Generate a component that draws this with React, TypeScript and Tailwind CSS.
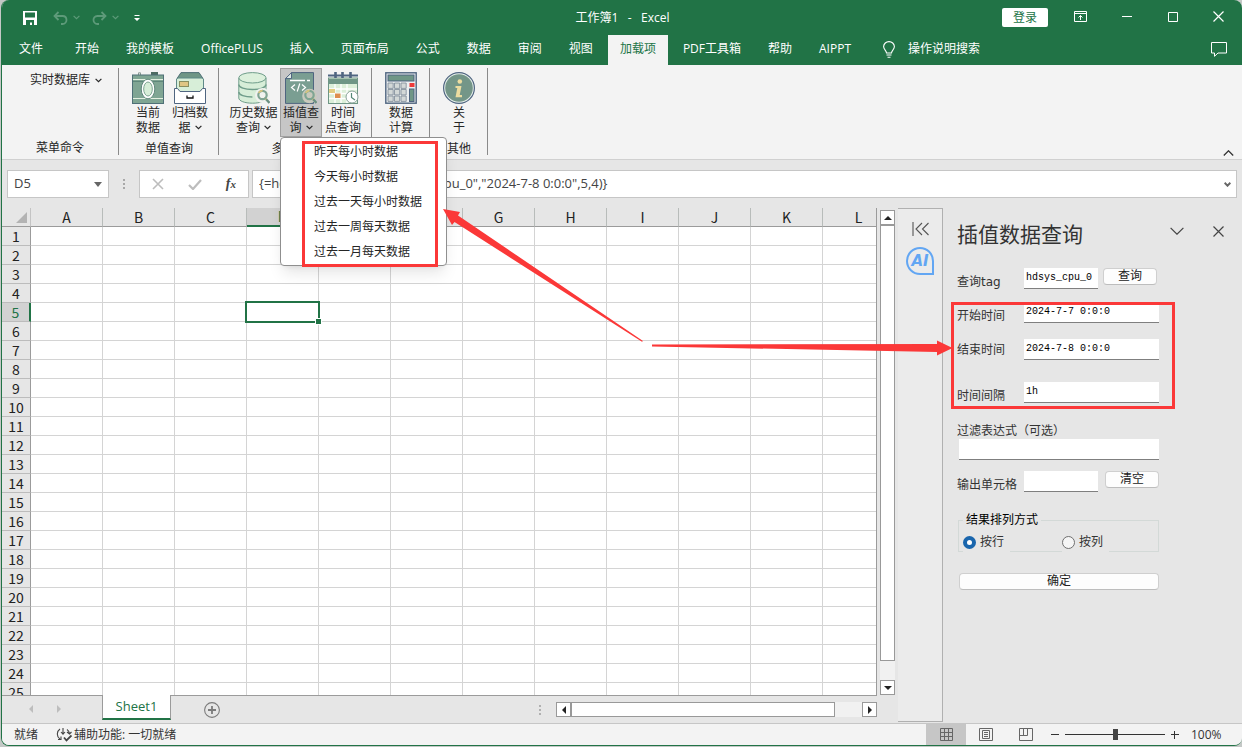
import type { ReactNode } from 'react';

const TABS = ['文件', '开始', '我的模板', 'OfficePLUS', '插入', '页面布局', '公式', '数据', '审阅', '视图', '加载项', 'PDF工具箱', '帮助', 'AIPPT'];
const COLUMNS = ['A', 'B', 'C', 'D', 'E', 'F', 'G', 'H', 'I', 'J', 'K', 'L'];
const ROWS = Array.from({ length: 25 }, (_, i) => i + 1);
const MENU_ITEMS = ['昨天每小时数据', '今天每小时数据', '过去一天每小时数据', '过去一周每天数据', '过去一月每天数据'];
const ACTIVE_COLUMN = 'D';
const ACTIVE_ROW = 5;

function Chevron({ className = '' }: { className?: string }) {
  return (
    <svg viewBox="0 0 7 5" className={`h-[5px] w-[7px] ${className}`} fill="none" stroke="currentColor" strokeWidth="1.2">
      <path d="M.6.8 3.5 3.7 6.4.8" />
    </svg>
  );
}

function Magnifier() {
  return (
    <g>
      <path d="m27.5 26.5 4 4.5" stroke="#6b9080" strokeWidth="2.4" />
      <path d="m26.5 25.5 1.6 1.8" stroke="#dcc67c" strokeWidth="2.6" />
      <circle cx="24.5" cy="23" r="4.2" fill="none" stroke="#7fa593" strokeWidth="2.2" />
      <path d="M20.6 21a4.4 4.4 0 0 1 4-2.4" fill="none" stroke="#dcc67c" strokeWidth="1.6" />
    </g>
  );
}

function CameraIcon() {
  return (
    <svg viewBox="0 0 32 32" className="h-8 w-8">
      <path d="M6.500 3V.8h2V3" fill="#eee" stroke="#8a9a94" />
      <rect x="19" y="0" width="7" height="3" fill="#4d6b62" />
      <rect x=".5" y="3" width="31" height="28.500" fill="#7fa593" stroke="#4f7077" />
      <path d="M1 7.500h30M1 26.500h30" stroke="#e3efe0" />
      <path d="M1 9.500h30" stroke="#5f877a" />
      <ellipse cx="16" cy="17" rx="6.800" ry="9.800" fill="#fff" stroke="#5f877a" />
      <ellipse cx="16" cy="17" rx="4.300" ry="7" fill="#d7eed8" stroke="#7fa593" />
    </svg>
  );
}

function ArchiveIcon() {
  return (
    <svg viewBox="0 0 32 32" className="h-8 w-8">
      <path d="M7 .6h18l4 5.900H3Z" fill="#6f9686" stroke="#4f7077" />
      <path d="M2.500 7 4 6h24l1.500 1v9l-3.500 3.500H6L2.500 16Z" fill="#d7eed8" stroke="#5f8a88" />
      <rect x="5.500" y="9.500" width="9" height="5" fill="#e0c584" stroke="#8a8f60" />
      <path d="M.5 16.500h3l2.500 3h20l2.500-3h3v15H.5Z" fill="#fff" stroke="#4f6580" />
      <path d="M13 23.500v2.500h6v-2.500" fill="none" stroke="#111" strokeWidth="1.300" />
    </svg>
  );
}

function DatabaseIcon() {
  return (
    <svg viewBox="0 0 32 32" className="h-8 w-8">
      <path d="M.8 6v20c0 3 6 5.200 13.700 5.200S28 29 28 26V6" fill="#d7eed8" stroke="#6f9d8a" />
      <ellipse cx="14.400" cy="5.800" rx="13.600" ry="5.200" fill="#dcf0dc" stroke="#6f9d8a" />
      <path d="M.8 12.500c0 3 6 5 13.600 5s13.600-2 13.600-5M.8 20c0 3 6 5 13.600 5" fill="none" stroke="#6f9d8a" strokeWidth="1.400" />
      <circle cx="24.500" cy="23.500" r="7.500" fill="#f0f2ee" />
      <Magnifier />
    </svg>
  );
}

function ScriptIcon() {
  return (
    <svg viewBox="0 0 32 32" className="h-8 w-8">
      <path d="M6.500.6h22v30.800h-28V6.500Z" fill="#7a9e92" stroke="#4f6580" />
      <path d="M6.500.6v6h-6Z" fill="#dfe9e4" stroke="#4f6580" />
      <path d="M5 8.500h15M22 8.500h3" stroke="#fff" strokeWidth="1.400" />
      <path d="m10 12.500-3.500 3 3.500 3M17 12.500l3.500 3-3.500 3M14.800 11.500l-2.600 8" fill="none" stroke="#fff" strokeWidth="1.200" />
      <circle cx="24.500" cy="24" r="7.300" fill="#c9c9bd" />
      <Magnifier />
    </svg>
  );
}

function CalendarIcon() {
  return (
    <svg viewBox="0 0 32 32" className="h-8 w-8">
      <path d="M1 3.500h30" stroke="#4f6580" strokeWidth="2" />
      <rect x="1.500" y="6" width="29" height="25.500" fill="#dcefd9" stroke="#6f9686" />
      <rect x="1" y="7" width="30" height="5" fill="#6f9686" />
      <path d="M8.500 0v6M15.500 0v6M23.500 0v6" stroke="#4f6580" strokeWidth="2.600" />
      <path d="M2 17h28M2 21.500h28M2 26.500h28M8 12v19M14 12v19M20 12v19" stroke="#fff" strokeWidth="1.300" />
      <rect x="2" y="17" width="6" height="4" fill="#e3cd83" />
      <rect x="8" y="21.500" width="5.500" height="4.500" fill="#de8e50" />
      <circle cx="25" cy="25" r="6" fill="#fff" stroke="#8aa39a" />
      <path d="M24.500 21v4.500l3.500 2.500" fill="none" stroke="#587" strokeWidth="1.200" />
    </svg>
  );
}

function CalculatorIcon() {
  return (
    <svg viewBox="0 0 32 32" className="h-8 w-8">
      <rect x=".8" y=".8" width="30.400" height="30.400" fill="#eceff0" stroke="#4f6580" strokeWidth="1.400" />
      <rect x="3" y="3" width="26" height="6" fill="#6f9686" stroke="#4f6580" />
      {[11, 17.5, 24].map(y =>
        [3, 9.5, 16].map(x => (
          <path key={`${x}-${y}`} d={`M${x} ${y}h5.200v5.400h-5.200Z`} fill="#d3d8d7" stroke="#7b8896" strokeWidth=".8" />
        )),
      )}
      <rect x="24.500" y="11" width="5" height="4" fill="#ee3a3a" />
      <rect x="24.500" y="17" width="4.500" height="12.500" fill="#6f9686" stroke="#4f6580" />
    </svg>
  );
}

function InfoIcon() {
  return (
    <svg viewBox="0 0 32 32" className="h-8 w-8">
      <circle cx="16" cy="16" r="15.400" fill="#e6efea" stroke="#4f6580" strokeWidth="1.200" />
      <circle cx="16" cy="16" r="13.800" fill="#749688" />
      <circle cx="16.800" cy="9.500" r="2.300" fill="#ecdca0" />
      <path d="M12.500 14h6l-1.800 9h2.300v2.200h-6.500L14.300 16h-1.800Z" fill="#ecdca0" />
    </svg>
  );
}

interface RibbonButtonProps {
  icon: ReactNode;
  lines: [string, string];
  wide?: boolean;
  dropdown?: boolean;
  open?: boolean;
}

function RibbonButton({ icon, lines, wide, dropdown, open }: RibbonButtonProps) {
  return (
    <button
      aria-haspopup={dropdown ? 'menu' : undefined}
      aria-expanded={dropdown ? !!open : undefined}
      className={`flex h-[69px] flex-col items-center border pt-[3px] ${wide ? 'w-[53px]' : 'w-[42px]'} ${open ? 'border-[#a0a0a0] bg-[#c6c6c6]' : 'border-transparent'}`}
    >
      {icon}
      <span className="mt-px leading-[15px] whitespace-nowrap">{lines[0]}</span>
      <span className="flex items-center gap-1 leading-[15px] whitespace-nowrap">
        {lines[1]}
        {dropdown && <Chevron />}
      </span>
    </button>
  );
}

function RibbonGroup({ label, children }: { label?: string; children: ReactNode }) {
  return (
    <section className="flex h-[87px] flex-col border-r border-[#8a8a8a] px-[7px] pl-2">
      <div className="flex">{children}</div>
      <div className="mt-[5px] text-center leading-[14px]">{label}</div>
    </section>
  );
}

function InterpolationMenu() {
  return (
    <div role="menu" className="absolute top-full left-0 z-20 w-[167px] rounded border border-[#8f8f8f] bg-white py-px shadow-lg">
      {MENU_ITEMS.map(item => (
        <button key={item} role="menuitem" className="block h-[25px] w-full pl-[33px] text-left leading-[25px]">
          {item}
        </button>
      ))}
      <div className="pointer-events-none absolute top-[3px] right-2 -bottom-0.5 left-[21px] border-3 border-[#fb3838]" />
    </div>
  );
}

function TitleBar() {
  return (
    <header className="flex h-[35px] items-center pl-[21px] text-white">
      <button aria-label="保存">
        <svg viewBox="0 0 14 14" className="h-3.5 w-3.5">
          <path d="M0 0h14v14H0Z" fill="#fff" />
          <path d="M2 1.500h10v5H2ZM3 9h8v5h-2v-2.500H7V14H3Z" fill="#217346" />
        </svg>
      </button>
      <button aria-label="撤消" className="ml-4 flex items-center gap-[5px] text-[#5d9a79]">
        <svg viewBox="0 0 15 14" className="h-3.5 w-[15px]" fill="none" stroke="currentColor" strokeWidth="1.8">
          <path d="M5.500 1 1.500 5l4 4M2 5h7.500c3 0 4 2 4 4s-1.500 4-4 4H8" />
        </svg>
        <Chevron />
      </button>
      <button aria-label="恢复" className="ml-3 flex items-center gap-[5px] text-[#5d9a79]">
        <svg viewBox="0 0 15 14" className="h-3.5 w-[15px]" fill="none" stroke="currentColor" strokeWidth="1.8">
          <path d="m9.500 1 4 4-4 4M13 5H5.500c-3 0-4 2-4 4s1.500 4 4 4H7" />
        </svg>
        <Chevron />
      </button>
      <button aria-label="自定义快速访问工具栏" className="ml-[15px]">
        <svg viewBox="0 0 6 6" className="h-1.5 w-1.5">
          <path d="M.5 0h5v1h-5ZM0 3h6L3 6Z" fill="#fff" />
        </svg>
      </button>
      <h1 className="flex-1 pl-[103px] text-center whitespace-pre">工作簿1   -   Excel</h1>
      <div className="flex items-center">
        <button className="h-[19px] w-[46px] rounded-xs bg-white leading-[19px] text-[#217346]">登录</button>
        <button aria-label="功能区显示选项" className="ml-[26px] pb-0.5">
          <svg viewBox="0 0 13 11" className="h-[11px] w-[13px]" fill="none" stroke="#fff">
            <path d="M.5.5h12v10H.5ZM.5 2.500h12M6.500 9V4.500M4.500 6.500l2-2 2 2" />
          </svg>
        </button>
        <button aria-label="最小化" className="ml-[35px] pb-0.5">
          <svg viewBox="0 0 10 10" className="h-2.5 w-2.5" stroke="#fff">
            <path d="M0 4.500h10" />
          </svg>
        </button>
        <button aria-label="最大化" className="ml-9 pb-0.5">
          <svg viewBox="0 0 10 10" className="h-2.5 w-2.5" fill="none" stroke="#fff">
            <path d="M.5.5h9v9h-9Z" />
          </svg>
        </button>
        <button aria-label="关闭" className="mr-[18px] ml-[35px] pb-0.5">
          <svg viewBox="0 0 11 11" className="h-[11px] w-[11px]" stroke="#fff" strokeWidth="1.2">
            <path d="m.5.5 10 10M10.500.5l-10 10" />
          </svg>
        </button>
      </div>
    </header>
  );
}

function TabBar() {
  return (
    <nav className="flex h-[30px] items-stretch gap-[3px] pl-[5px] text-white">
      {TABS.map(tab => (
        <button
          key={tab}
          className={`px-3 pb-0.5 whitespace-nowrap first:mr-[5px] ${tab === '加载项' ? 'bg-[#f3f3f3] text-[#217346]' : ''}`}
        >
          {tab}
        </button>
      ))}
      <button className="ml-[17px] flex items-center gap-[13px] pb-0.5 whitespace-nowrap">
        <svg viewBox="0 0 12 17" className="h-[17px] w-3" fill="none" stroke="#fff" strokeWidth="1.1">
          <path d="M3.500 12c0-2.500-2.900-3.400-2.900-6.400A5.300 5.300 0 0 1 6 .6a5.300 5.300 0 0 1 5.400 5c0 3-2.900 3.900-2.900 6.400ZM3.500 14h5M4.500 16.200h3" />
        </svg>
        操作说明搜索
      </button>
      <button aria-label="批注" className="mr-[15px] ml-auto pb-0.5">
        <svg viewBox="0 0 16 15" className="h-[15px] w-4" fill="none" stroke="#fff">
          <path d="M.5.5h15v10.500H7L3.500 14.300V11h-3Z" />
        </svg>
      </button>
    </nav>
  );
}

function Ribbon() {
  return (
    <div className="flex h-[95px] shrink-0 border-b border-[#d0d0d0] bg-[#f3f3f3] pt-[3px] text-[#262626]">
      <section className="flex h-[87px] w-[117px] flex-col items-center border-r border-[#8a8a8a]">
        <div className="h-[69px] pt-1">
          <button className="ml-3 flex items-center gap-[5px] leading-4">
            实时数据库
            <Chevron />
          </button>
        </div>
        <div className="mt-[5px] leading-[14px]">菜单命令</div>
      </section>
      <RibbonGroup label="单值查询">
        <RibbonButton icon={<CameraIcon />} lines={['当前', '数据']} />
        <RibbonButton icon={<ArchiveIcon />} lines={['归档数', '据']} dropdown />
      </RibbonGroup>
      <RibbonGroup label="多值查询">
        <RibbonButton icon={<DatabaseIcon />} lines={['历史数据', '查询']} wide dropdown />
        <div className="relative">
          <RibbonButton icon={<ScriptIcon />} lines={['插值查', '询']} dropdown open />
          <InterpolationMenu />
        </div>
        <RibbonButton icon={<CalendarIcon />} lines={['时间', '点查询']} />
      </RibbonGroup>
      <RibbonGroup>
        <RibbonButton icon={<CalculatorIcon />} lines={['数据', '计算']} />
      </RibbonGroup>
      <RibbonGroup label="其他">
        <RibbonButton icon={<InfoIcon />} lines={['关', '于']} />
      </RibbonGroup>
      <button aria-label="折叠功能区" className="mr-2 mb-[3px] ml-auto self-end">
        <svg viewBox="0 0 11 6" className="h-1.5 w-[11px]" fill="none" stroke="#333" strokeWidth="1.3">
          <path d="m.8 5.500 4.700-4.700 4.700 4.700" />
        </svg>
      </button>
    </div>
  );
}

function FormulaBar() {
  return (
    <div className="flex h-12 shrink-0 items-start px-[5px] pt-2.5 text-[13px] text-[#444]">
      <div className="flex h-7 w-[102px] items-center border border-[#c6c6c6] bg-white pr-1.5">
        <input aria-label="名称框" defaultValue="D5" className="w-full min-w-0 pl-1.5 outline-none" />
        <svg viewBox="0 0 8 5" className="h-[5px] w-2 shrink-0">
          <path d="M0 0h8L4 5Z" fill="#666" />
        </svg>
      </div>
      <div className="flex h-7 w-[30px] flex-col items-center justify-center gap-0.5">
        <i className="h-0.5 w-0.5 bg-[#a8a8a8]" />
        <i className="h-0.5 w-0.5 bg-[#a8a8a8]" />
        <i className="h-0.5 w-0.5 bg-[#a8a8a8]" />
      </div>
      <div className="flex h-7 w-[110px] items-center justify-between border border-[#c6c6c6] bg-white px-3">
        <button aria-label="取消">
          <svg viewBox="0 0 12 12" className="h-3 w-3" stroke="#bdbdbd" strokeWidth="1.6">
            <path d="m1 1 10 10M11 1 1 11" />
          </svg>
        </button>
        <button aria-label="输入">
          <svg viewBox="0 0 14 11" className="h-[11px] w-3.5" fill="none" stroke="#bdbdbd" strokeWidth="2.2">
            <path d="m1 6 4 4L13 1" />
          </svg>
        </button>
        <button aria-label="插入函数" className="font-['Liberation_Serif',serif] text-sm font-bold italic">
          f<span className="text-[11px]">x</span>
        </button>
      </div>
      <div className="ml-[3px] flex h-7 flex-1 items-center border border-[#c6c6c6] bg-white pr-[5px]">
        <input
          aria-label="编辑栏"
          defaultValue={'{=hdGetIntervalValue("hdsys_cpu_0","2024-7-8 0:0:0",5,4)}'}
          className="w-full min-w-0 pl-1.5 outline-none"
        />
        <Chevron className="shrink-0 stroke-2 text-[#666]" />
      </div>
    </div>
  );
}

function SheetGrid() {
  return (
    <div className="min-h-0 flex-1 overflow-hidden border-r border-[#9b9b9b]">
      <table className="w-[893px] table-fixed border-separate border-spacing-0 font-['Noto_Sans_CJK_SC',sans-serif] text-sm leading-[18px] text-[#222]">
        <thead>
          <tr className="h-[19px]">
            <th className="w-[29px] border-r border-b border-r-[#c4c4c4] border-b-[#9b9b9b] p-0">
              <svg viewBox="0 0 11 11" className="mr-[3px] ml-auto h-[11px] w-[11px]">
                <path d="M11 0v11H0Z" fill="#b3b3b3" />
              </svg>
            </th>
            {COLUMNS.map(col => (
              <th
                key={col}
                className={`w-[72px] border-r border-r-[#b8bcba] p-0 font-normal ${
                  col === ACTIVE_COLUMN ? 'border-b-2 border-b-[#217346] bg-[#d2d2d2] leading-[17px] text-[#217346]' : 'border-b border-b-[#9b9b9b]'
                }`}
              >
                {col}
              </th>
            ))}
          </tr>
        </thead>
        <tbody>
          {ROWS.map(row => (
            <tr key={row} className="h-[19px]">
              <th
                className={`border-b border-b-[#bcbcbc] p-0 font-normal ${
                  row === ACTIVE_ROW ? 'border-r-2 border-r-[#217346] bg-[#d2d2d2] text-[#217346]' : 'border-r border-r-[#9b9b9b]'
                }`}
              >
                {row}
              </th>
              {COLUMNS.map(col => (
                <td key={col} className="relative border-r border-b border-[#d4d4d4] bg-white p-0">
                  {row === ACTIVE_ROW && col === ACTIVE_COLUMN && (
                    <div className="absolute -inset-0.5 z-10 border-2 border-[#217346]">
                      <i className="absolute -right-[4px] -bottom-[4px] h-[7px] w-[7px] border border-white bg-[#217346]" />
                    </div>
                  )}
                </td>
              ))}
            </tr>
          ))}
        </tbody>
      </table>
    </div>
  );
}

const ARROWS = {
  up: 'M0 6 4 2 8 6Z',
  down: 'M0 2 4 6 8 2Z',
  left: 'M6 0 2 4 6 8Z',
  right: 'M2 0 6 4 2 8Z',
};

function ScrollButton({ direction, label }: { direction: keyof typeof ARROWS; label: string }) {
  return (
    <button aria-label={label} className="flex h-[15px] w-[15px] shrink-0 items-center justify-center border border-[#999] bg-white">
      <svg viewBox="0 0 8 8" className="h-2 w-2">
        <path d={ARROWS[direction]} fill="#222" />
      </svg>
    </button>
  );
}

function SheetBar() {
  return (
    <div className="flex h-7 shrink-0 border-t border-[#9b9b9b]">
      <div className="flex w-[100px] items-center gap-5 pb-0.5 pl-[25px]">
        <svg viewBox="0 0 8 8" className="h-2 w-2">
          <path d={ARROWS.left} fill="#bdbdbd" />
        </svg>
        <svg viewBox="0 0 8 8" className="h-2 w-2">
          <path d={ARROWS.right} fill="#bdbdbd" />
        </svg>
      </div>
      <button className="-mt-px h-[25px] w-[69px] border-x border-b-2 border-x-[#9b9b9b] border-b-[#217346] bg-white text-[13px] text-[#217346]">
        Sheet1
      </button>
      <button aria-label="新工作表" className="ml-[33px]">
        <svg viewBox="0 0 16 16" className="h-4 w-4" fill="none" stroke="#7b7b7b">
          <circle cx="8" cy="8" r="7.400" strokeWidth="1.100" />
          <path d="M8 4v8M4 8h8" strokeWidth="1.800" />
        </svg>
      </button>
      <div className="mr-[15px] ml-auto flex flex-col justify-center gap-0.5">
        <i className="h-0.5 w-0.5 bg-[#b0b0b0]" />
        <i className="h-0.5 w-0.5 bg-[#b0b0b0]" />
        <i className="h-0.5 w-0.5 bg-[#b0b0b0]" />
      </div>
      <div className="mt-1.5 flex h-[15px] w-[321px] bg-[#f1f1f1]">
        <ScrollButton direction="left" label="向左滚动" />
        <div className="w-[264px] border border-[#999] bg-white" />
        <div className="flex-1" />
        <ScrollButton direction="right" label="向右滚动" />
      </div>
    </div>
  );
}

function VerticalScroll() {
  return (
    <div className="mx-[3px] mt-0.5 mb-7 flex w-[15px] flex-col bg-[#f1f1f1]">
      <ScrollButton direction="up" label="向上滚动" />
      <div className="flex-1 border border-[#999] bg-white" />
      <div className="h-[19px]" />
      <ScrollButton direction="down" label="向下滚动" />
    </div>
  );
}

function SideStrip() {
  return (
    <aside className="mb-px flex w-[45px] flex-col items-center border-t border-r border-b border-[#b0b0b0] bg-[#ebebeb] pt-[13px]">
      <button aria-label="展开窗格">
        <svg viewBox="0 0 17 14" className="h-3.5 w-[17px]" fill="none" stroke="#555" strokeWidth="1.100">
          <path d="M1 0v14M10 1 4 7l6 6M16.500 1l-6 6 6 6" />
        </svg>
      </button>
      <button
        aria-label="AI 助手"
        className="mt-[11px] flex h-7 w-7 items-center justify-center rounded-full rounded-br-xs border-2 border-[#62a6f3] font-['DejaVu_Sans',sans-serif] text-[15px] leading-none font-bold text-[#62a6f3] italic"
      >
        AI
      </button>
    </aside>
  );
}

interface FieldProps {
  id: string;
  label: string;
  value?: string;
  className?: string;
  short?: boolean;
  children?: ReactNode;
}

const INPUT_CLASS =
  "h-[21px] border-b border-[#7f7f7f] bg-white px-0.5 pb-0.5 font-['Liberation_Mono',monospace] text-[10px] leading-[18px] text-black outline-none";

function Field({ id, label, value = '', className = 'items-end', short, children }: FieldProps) {
  return (
    <div className={`flex ${className}`}>
      <label htmlFor={id} className="w-[67px] shrink-0 leading-[14px]">
        {label}
      </label>
      <input id={id} defaultValue={value} className={`${INPUT_CLASS} ${short ? 'w-[74px]' : 'min-w-0 flex-1'}`} />
      {children}
    </div>
  );
}

function PillButton({ children, className }: { children: ReactNode; className: string }) {
  return (
    <button className={`h-[17px] rounded border border-[#cfcfcf] border-b-[#bdbdbd] bg-[#fdfdfd] leading-[15px] text-[#222] ${className}`}>
      {children}
    </button>
  );
}

function QueryPane() {
  return (
    <aside className="w-[299px] pl-3.5 text-[#333]">
      <div className="flex h-[46px] items-center">
        <h2 className="pt-1.5 text-[21px] leading-7">插值数据查询</h2>
        <button aria-label="任务窗格选项" className="ml-auto">
          <svg viewBox="0 0 14 8" className="h-2 w-3.5" fill="none" stroke="#444" strokeWidth="1.2">
            <path d="m.6.8 6.400 6.400 6.400-6.400" />
          </svg>
        </button>
        <button aria-label="关闭窗格" className="mr-[18px] ml-[29px]">
          <svg viewBox="0 0 11 11" className="h-[11px] w-[11px]" stroke="#444" strokeWidth="1.2">
            <path d="m.5.5 10 10M10.500.5l-10 10" />
          </svg>
        </button>
      </div>
      <form className="pt-3.5 pr-[83px] font-['DejaVu_Sans','Noto_Sans_CJK_SC',sans-serif]">
        <Field id="tag" label="查询tag" value="hdsys_cpu_0" short>
          <PillButton className="ml-[5px] w-[54px] self-start">查询</PillButton>
        </Field>
        <div className="relative mt-[13px]">
          <Field id="start" label="开始时间" value="2024-7-7 0:0:0" />
          <Field id="end" label="结束时间" value="2024-7-8 0:0:0" className="mt-4 items-center" />
          <Field id="interval" label="时间间隔" value="1h" className="mt-[22px] items-end" />
          <div className="pointer-events-none absolute top-0 -right-4 -bottom-1.5 -left-1.5 border-3 border-[#fb3838]" />
        </div>
        <label htmlFor="filter" className="mt-[21px] block leading-[14px]">
          过滤表达式（可选）
        </label>
        <input id="filter" className={`${INPUT_CLASS} mt-px ml-0.5 block w-[calc(100%-2px)]`} />
        <Field id="output" label="输出单元格" short className="mt-[11px] items-end">
          <PillButton className="ml-[7px] w-[54px] self-start">清空</PillButton>
        </Field>
        <fieldset className="mt-5 ml-px flex border border-[#d3d9d7] pl-1">
          <legend className="px-[3px] leading-4 text-black">结果排列方式</legend>
          <label className="-mb-px flex h-6 w-[47px] items-center gap-1 bg-[#e6e6e6] pt-1">
            <input
              type="radio"
              name="layout"
              defaultChecked
              className="h-[13px] w-[13px] shrink-0 appearance-none rounded-full border border-[#707070] bg-[#f5f5f5] checked:border-4 checked:border-[#1a66ad] checked:bg-white"
            />
            按行
          </label>
          <label className="-mb-px ml-[52px] flex h-6 w-[47px] items-center gap-1 bg-[#e6e6e6] pt-1">
            <input
              type="radio"
              name="layout"
              className="h-[13px] w-[13px] shrink-0 appearance-none rounded-full border border-[#707070] bg-[#f5f5f5] checked:border-4 checked:border-[#1a66ad] checked:bg-white"
            />
            按列
          </label>
        </fieldset>
        <PillButton className="mt-[21px] ml-0.5 block w-[calc(100%-2px)]">确定</PillButton>
      </form>
    </aside>
  );
}

function StatusBar() {
  return (
    <footer className="flex h-[22px] shrink-0 items-stretch border-t border-[#c6c6c6] bg-[#f3f3f3] pl-3 text-[#333]">
      <span className="self-center">就绪</span>
      <button className="ml-[18px] flex items-center gap-0.5 whitespace-nowrap">
        <svg viewBox="0 0 16 15" className="h-[15px] w-4" fill="none" stroke="#444" strokeWidth="1.1">
          <path d="M4 2a6 6 0 0 0 0 10M7 1v6M5 5l2 2.200L9 5M2 12.500h3V9.500M11 2.500a6 6 0 0 1 2.500 4M11 5l2.500 2L15.500 5" />
          <path d="m8 10.500 2.500 3L15.500 8.500" strokeWidth="1.800" />
        </svg>
        辅助功能: 一切就绪
      </button>
      <div className="ml-auto flex items-stretch">
        <button aria-label="普通" className="flex w-10 items-center justify-center bg-[#c6c6c6]">
          <svg viewBox="0 0 13 13" className="h-[13px] w-[13px]" fill="none" stroke="#666">
            <path d="M.5.5h12v12H.5ZM4.500.5v12M8.500.5v12M.5 4.500h12M.5 8.500h12" />
          </svg>
        </button>
        <button aria-label="页面布局视图" className="flex w-10 items-center justify-center">
          <svg viewBox="0 0 14 13" className="h-[13px] w-3.5" fill="none" stroke="#666">
            <path d="M.5.5h13v12H.5ZM3.500 2.500h7v8h-7ZM5 4.500h4M5 6.500h4M5 8.500h4" />
          </svg>
        </button>
        <button aria-label="分页预览" className="flex w-10 items-center justify-center">
          <svg viewBox="0 0 14 13" className="h-[13px] w-3.5" fill="none" stroke="#666">
            <path d="M.5.5h13v12H.5ZM.5 7.500h8V.5M4.500.5v7" />
          </svg>
        </button>
        <div className="flex items-center pl-[5px]">
          <button aria-label="缩小">
            <svg viewBox="0 0 8 8" className="h-2 w-2" stroke="#333">
              <path d="M0 3.500h8" />
            </svg>
          </button>
          <input
            type="range"
            aria-label="显示比例"
            defaultValue={50}
            className="mx-1.5 h-3 w-[100px] appearance-none bg-[linear-gradient(#333,#333)] bg-[length:100%_1px] bg-center bg-no-repeat [&::-webkit-slider-thumb]:h-[11px] [&::-webkit-slider-thumb]:w-[5px] [&::-webkit-slider-thumb]:appearance-none [&::-webkit-slider-thumb]:bg-[#444]"
          />
          <button aria-label="放大">
            <svg viewBox="0 0 8 8" className="h-2 w-2" stroke="#333">
              <path d="M0 3.500h8M3.500 0v8" />
            </svg>
          </button>
          <span className="w-[63px] pl-3">100%</span>
        </div>
      </div>
    </footer>
  );
}

function CalloutArrows() {
  return (
    <svg viewBox="439 205 513 152" className="pointer-events-none absolute top-[205px] left-[438px] z-30 h-[152px] w-[513px]" fill="#fb3838">
      <path d="m442 209 17 3-2 3.500L642 341l-1 .8L453.500 222l-2.500 3Z" />
      <path d="M651 344.500 936 344v-3.500l15.500 7.500-15.500 7.500V352L651 346.500Z" />
    </svg>
  );
}

export default function App() {
  return (
    <div className="h-screen bg-[#c4c8c6] pb-px pl-px">
      <div className="relative flex h-full flex-col overflow-hidden rounded-lg border-b border-l border-[#217346] bg-[#e6e6e6] font-['Open_Sans','Noto_Sans_CJK_SC',sans-serif] text-xs">
        <div className="shrink-0 bg-[#217346]">
          <TitleBar />
          <TabBar />
        </div>
        <Ribbon />
        <FormulaBar />
        <main className="flex min-h-0 flex-1">
          <div className="flex min-w-0 flex-1 flex-col">
            <SheetGrid />
            <SheetBar />
          </div>
          <VerticalScroll />
          <SideStrip />
          <QueryPane />
        </main>
        <StatusBar />
        <CalloutArrows />
      </div>
    </div>
  );
}
